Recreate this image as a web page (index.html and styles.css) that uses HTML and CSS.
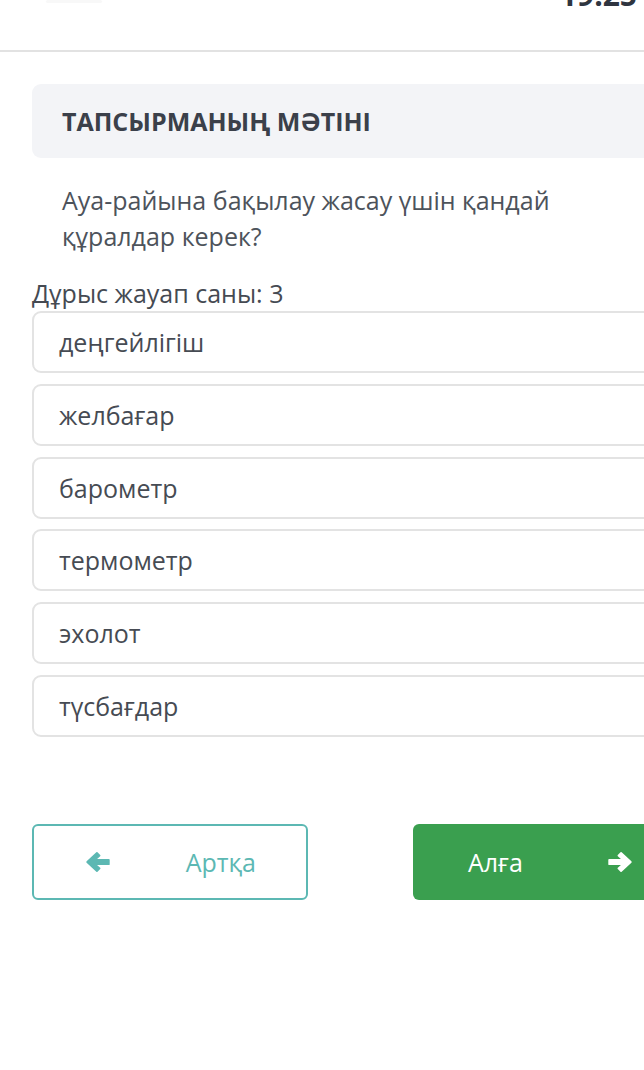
FILE: index.html
```html
<!DOCTYPE html>
<html lang="kk">
<head>
<meta charset="utf-8">
<title>Тапсырма</title>
<link rel="stylesheet" href="styles.css">
</head>
<body>
<header class="topbar">
  <span class="logo-ghost"></span>
  <span class="timer">19:25</span>
</header>
<main class="content">
  <div class="task-head">ТАПСЫРМАНЫҢ МӘТІНІ</div>
  <p class="question">Ауа-райына бақылау жасау үшін қандай құралдар керек?</p>
  <div class="count">Дұрыс жауап саны: 3</div>
  <ul class="options">
    <li class="option">деңгейлігіш</li>
    <li class="option">желбағар</li>
    <li class="option">барометр</li>
    <li class="option">термометр</li>
    <li class="option">эхолот</li>
    <li class="option">түсбағдар</li>
  </ul>
  <div class="nav">
    <button class="btn btn-back">
      <svg class="arrow" viewBox="0 0 24 24" width="26" height="26"><path d="M2 12 L11 3.5 L13.5 6 L9 10 H22 V14 H9 L13.5 18 L11 20.5 Z" fill="currentColor" stroke="currentColor" stroke-width="1.6" stroke-linejoin="round"/></svg>
      <span>Артқа</span>
    </button>
    <button class="btn btn-next">
      <span>Алға</span>
      <svg class="arrow" viewBox="0 0 24 24" width="26" height="26"><path d="M22 12 L13 3.5 L10.5 6 L15 10 H2 V14 H15 L10.5 18 L13 20.5 Z" fill="currentColor" stroke="currentColor" stroke-width="1.6" stroke-linejoin="round"/></svg>
    </button>
  </div>
</main>
</body>
</html>
```

FILE: styles.css
```css
* { box-sizing: border-box; }
html, body {
  margin: 0;
  padding: 0;
  background: #ffffff;
  overflow: hidden;
  width: 644px;
}
body {
  font-family: "Open Sans", "Noto Sans", sans-serif;
  color: #444a52;
}
.topbar {
  height: 52px;
  border-bottom: 2px solid #e2e2e2;
  display: flex;
  justify-content: space-between;
  align-items: flex-start;
  overflow: hidden;
  padding: 0 7px 0 46px;
}
.logo-ghost {
  display: block;
  width: 56px;
  height: 3px;
  background: #f8f8f8;
  border-radius: 2px;
}
.timer {
  display: block;
  font-size: 30px;
  font-weight: 700;
  color: #2f3540;
  line-height: 30px;
  margin-top: -20px;
}
.content {
  width: 700px;
  margin-left: 32px;
  padding-top: 32px;
}
.task-head {
  background: #f3f4f7;
  border-radius: 9px;
  height: 74px;
  padding-left: 30px;
  display: flex;
  align-items: center;
  font-size: 25px;
  font-weight: 700;
  color: #3b404a;
}
.question {
  margin: 24px 0 0;
  padding-left: 30px;
  width: 580px;
  font-size: 25px;
  line-height: 36px;
  color: #4d535b;
}
.count {
  margin-top: 24px;
  font-size: 25px;
  line-height: 30px;
  color: #454a52;
}
.options {
  list-style: none;
  margin: 3px 0 0;
  padding: 0;
  display: flex;
  flex-direction: column;
  gap: 10.8px;
}
.option {
  height: 62px;
  border: 2px solid #e3e3e3;
  border-radius: 9px;
  display: flex;
  align-items: center;
  padding-left: 25px;
  font-size: 25px;
  color: #464b53;
}
.nav {
  margin-top: 87px;
  display: flex;
  gap: 105px;
}
.btn {
  width: 276px;
  height: 76px;
  border-radius: 6px;
  font-family: inherit;
  font-size: 25px;
  display: flex;
  align-items: center;
  justify-content: space-between;
  cursor: pointer;
}
.btn-back {
  background: #ffffff;
  border: 2px solid #5cb8b3;
  color: #5cb8b3;
  padding: 0 50px 0 51px;
}
.btn-next {
  background: #3a9f4f;
  border: none;
  color: #ffffff;
  padding: 0 56px 0 55px;
}
.arrow { display: block; }
```
